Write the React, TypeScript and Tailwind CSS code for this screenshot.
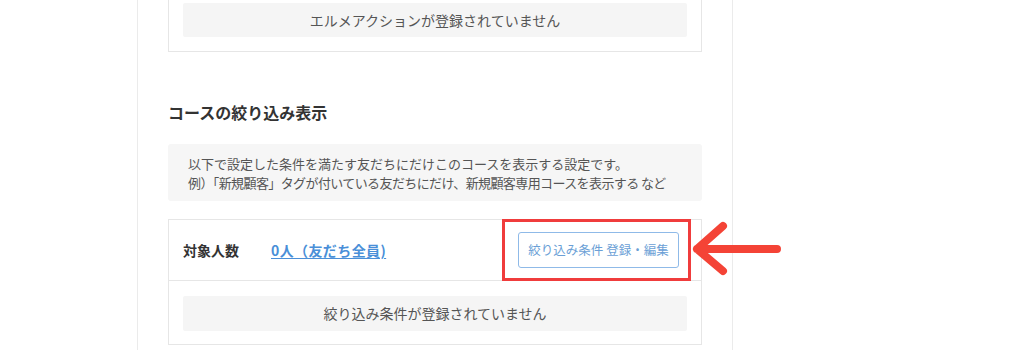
import React from "react";

export default function App() {
  return (
    <div
      className="relative w-[1024px] h-[363px] overflow-hidden bg-white"
      style={{ fontFamily: '"Noto Sans CJK JP", "Noto Sans", sans-serif' }}
    >
      <div className="ml-[137px] w-[596px] h-[363px] border-x border-[#ebebeb] px-[30px]">
        {/* top card (scrolled) */}
        <div className="-mt-[13px] border border-[#e6e6e6] px-[14px] pt-[15px] pb-[14px]">
          <div className="h-[34px] bg-[#f5f5f5] rounded-[2px] flex items-center justify-center text-[14px] text-[#555]">
            エルメアクションが登録されていません
          </div>
        </div>

        <h2 className="mt-[48px] text-[16px] leading-[24px] font-bold text-[#333]">
          コースの絞り込み表示
        </h2>

        <div className="mt-[20px] bg-[#f6f6f6] rounded-[3px] pl-[20px] py-[9.5px] text-[13px] leading-[19px] text-[#555]">
          <p>以下で設定した条件を満たす友だちにだけこのコースを表示する設定です。</p>
          <p className="tracking-[-0.6px]">例）「新規顧客」タグが付いている友だちにだけ、新規顧客専用コースを表示する など</p>
        </div>

        <div className="mt-[18px] border border-[#e6e6e6]">
          <div className="h-[61px] flex items-center pl-[14px] pr-[22px] border-b border-[#e6e6e6]">
            <span className="text-[14px] font-bold text-[#333]">対象人数</span>
            <a className="ml-[32px] text-[14px] font-bold text-[#4a8fd8] underline underline-offset-2 tracking-[0.4px]">
              0人（友だち全員)
            </a>
            <div className="ml-auto relative">
              <button className="h-[36px] w-[161px] border border-[#8fbae8] rounded-[3px] text-[12.5px] text-[#6b9fd6] bg-white">
                絞り込み条件 登録・編集
              </button>
              <div className="absolute -left-[16px] -right-[12px] -top-[13px] -bottom-[13px] border-[3px] border-[#f03c3c] pointer-events-none" />
            </div>
          </div>
          <div className="px-[14px] pt-[15px] pb-[13px]">
            <div className="h-[35px] bg-[#f5f5f5] rounded-[2px] flex items-center justify-center text-[14px] text-[#555]">
              絞り込み条件が登録されていません
            </div>
          </div>
        </div>
      </div>

      {/* arrow annotation */}
      <svg
        className="absolute left-[680px] top-[210px] pointer-events-none"
        width="110"
        height="80"
        viewBox="680 210 110 80"
      >
        <path
          d="M777 249 L697 249 M723 226 L697 249 L723 271"
          fill="none"
          stroke="#f44336"
          strokeWidth="8"
          strokeLinecap="round"
          strokeLinejoin="round"
        />
      </svg>
    </div>
  );
}
